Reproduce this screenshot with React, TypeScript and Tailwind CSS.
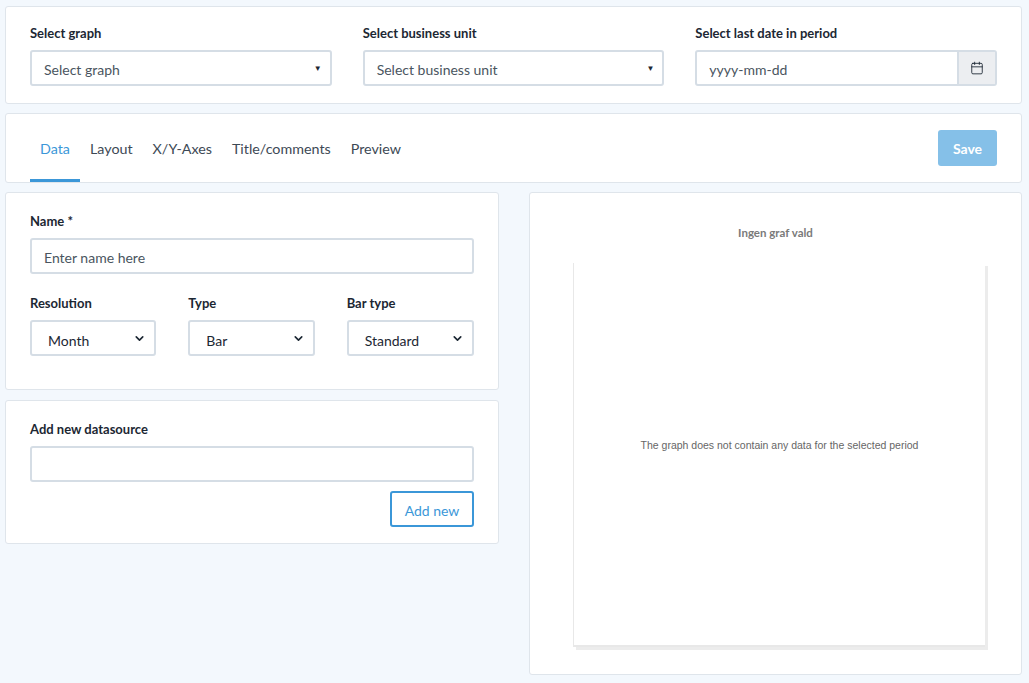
import { Calendar, ChevronDown } from "lucide-react";

const Label = ({ children }: { children: React.ReactNode }) => (
  <div className="text-[13px] font-bold text-[#1c2733] mb-[9px] leading-4">{children}</div>
);

const Select = ({ value, w }: { value: string; w: string }) => (
  <div className={`${w} h-9 border-2 border-[#d5dde5] rounded-[3px] flex items-center justify-between pl-4 pr-2 text-[14px] text-[#1c2733]`}>
    <span className="mt-[4px]">{value}</span>
    <ChevronDown size={13} strokeWidth={3} />
  </div>
);

export default function App() {
  return (
    <div className="min-h-[683px] bg-[#f3f8fd] pl-[5px] pr-[7px] pt-[6px] pb-2 text-[#1c2733]" style={{ fontFamily: "Lato, 'Noto Sans', sans-serif" }}>
      <div className="bg-white border border-[#dfe5eb] rounded-[3px] px-6 pt-[18px] pb-[17px] grid grid-cols-3 gap-[31px]">
        <div>
          <Label>Select graph</Label>
          <div className="h-9 border-2 border-[#d5dde5] rounded-[3px] flex items-center justify-between pl-3 pr-2 text-[14px] text-[#4a5560]">
            <span className="mt-[2px]">Select graph</span>
            <span className="text-[8px] text-[#1c2733]">▼</span>
          </div>
        </div>
        <div>
          <Label>Select business unit</Label>
          <div className="h-9 border-2 border-[#d5dde5] rounded-[3px] flex items-center justify-between pl-3 pr-2 text-[14px] text-[#4a5560]">
            <span className="mt-[2px]">Select business unit</span>
            <span className="text-[8px] text-[#1c2733]">▼</span>
          </div>
        </div>
        <div>
          <Label>Select last date in period</Label>
          <div className="h-9 border-2 border-[#d5dde5] rounded-[3px] flex text-[14px] text-[#4a5560]">
            <span className="flex-1 flex items-center pl-3 pt-[2px]">yyyy-mm-dd</span>
            <span className="w-[38px] bg-[#eceef1] border-l-2 border-[#d5dde5] flex items-center justify-center">
              <Calendar size={14} strokeWidth={1.5} className="text-[#1c2733]" />
            </span>
          </div>
        </div>
      </div>

      <div className="mt-[9px] bg-white border border-[#dfe5eb] rounded-[3px] h-[70px] px-6 flex items-stretch justify-between">
        <div className="flex items-stretch text-[14.3px] text-[#3d4955]">
          {["Data", "Layout", "X/Y-Axes", "Title/comments", "Preview"].map((t, i) => (
            <div key={t} className={`flex items-center pt-[4px] px-[10px] border-b-[3px] ${i === 0 ? "border-[#3b97d8] text-[#3b97d8]" : "border-transparent"}`}>
              {t}
            </div>
          ))}
        </div>
        <div className="flex items-center">
          <button className="w-[59px] h-9 rounded-[3px] bg-[#85c0e8] text-white text-[14px] font-bold">Save</button>
        </div>
      </div>

      <div className="mt-[9px] flex gap-[30px]">
        <div className="w-[494px] flex flex-col gap-[10px]">
          <div className="bg-white border border-[#dfe5eb] rounded-[3px] px-6 pt-5 pb-[33px]">
            <Label>Name *</Label>
            <div className="h-9 border-2 border-[#d5dde5] rounded-[3px] flex items-center pl-3 pt-[2px] text-[14px] text-[#4a5560]">Enter name here</div>
            <div className="mt-[21px] grid grid-cols-3 gap-[31px]">
              <div><Label>Resolution</Label><Select value="Month" w="w-[126px]" /></div>
              <div><Label>Type</Label><Select value="Bar" w="w-[127px]" /></div>
              <div><Label>Bar type</Label><Select value="Standard" w="w-[127px]" /></div>
            </div>
          </div>
          <div className="bg-white border border-[#dfe5eb] rounded-[3px] px-6 pt-5 pb-4">
            <Label>Add new datasource</Label>
            <div className="h-9 border-2 border-[#d5dde5] rounded-[3px]" />
            <div className="flex justify-end mt-[9px]">
              <button className="w-[84px] h-9 border-2 border-[#3b97d8] rounded-[3px] text-[#3b97d8] text-[14px] pt-[2px]">Add new</button>
            </div>
          </div>
        </div>

        <div className="flex-1 h-[483px] bg-white border border-[#dfe5eb] rounded-[3px] flex flex-col items-center pt-[31px]">
          <div className="text-[11.5px] font-bold text-[#7a7a7a]">Ingen graf vald</div>
          <div className="mt-[22px] w-[412px] h-[384px] ml-[7px] border-l border-b-2 border-[#e8e8e8] shadow-[3px_3px_0_#ececec] flex items-center justify-center pb-[16px]">
            <span className="text-[10.5px] text-[#666]" style={{ fontFamily: "'Liberation Sans', sans-serif" }}>The graph does not contain any data for the selected period</span>
          </div>
        </div>
      </div>
    </div>
  );
}
